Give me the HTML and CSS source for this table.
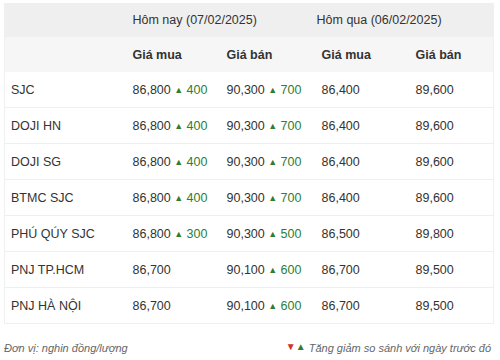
FILE: index.html
```html
<!DOCTYPE html>
<html lang="vi">
<head>
<meta charset="utf-8">
<link rel="stylesheet" href="styles.css">
</head>
<body>
<div class="wrap">
<table class="gold">
  <colgroup>
    <col class="c1"><col class="c2"><col class="c3"><col class="c4"><col class="c5">
  </colgroup>
  <thead>
    <tr class="h1">
      <th></th>
      <th colspan="2">Hôm nay (07/02/2025)</th>
      <th colspan="2" class="prev">Hôm qua (06/02/2025)</th>
    </tr>
    <tr class="h2">
      <th></th>
      <th>Giá mua</th><th>Giá bán</th><th>Giá mua</th><th>Giá bán</th>
    </tr>
  </thead>
  <tbody>
    <tr><td>SJC</td><td>86,800 <span class="up"><i>▲</i> 400</span></td><td>90,300 <span class="up"><i>▲</i> 700</span></td><td>86,400</td><td>89,600</td></tr>
    <tr><td>DOJI HN</td><td>86,800 <span class="up"><i>▲</i> 400</span></td><td>90,300 <span class="up"><i>▲</i> 700</span></td><td>86,400</td><td>89,600</td></tr>
    <tr><td>DOJI SG</td><td>86,800 <span class="up"><i>▲</i> 400</span></td><td>90,300 <span class="up"><i>▲</i> 700</span></td><td>86,400</td><td>89,600</td></tr>
    <tr><td>BTMC SJC</td><td>86,800 <span class="up"><i>▲</i> 400</span></td><td>90,300 <span class="up"><i>▲</i> 700</span></td><td>86,400</td><td>89,600</td></tr>
    <tr><td>PHÚ QÚY SJC</td><td>86,800 <span class="up"><i>▲</i> 300</span></td><td>90,300 <span class="up"><i>▲</i> 500</span></td><td>86,500</td><td>89,800</td></tr>
    <tr><td>PNJ TP.HCM</td><td>86,700</td><td>90,100 <span class="up"><i>▲</i> 600</span></td><td>86,700</td><td>89,500</td></tr>
    <tr><td>PNJ HÀ NỘI</td><td>86,700</td><td>90,100 <span class="up"><i>▲</i> 600</span></td><td>86,700</td><td>89,500</td></tr>
  </tbody>
</table>
<div class="foot">
  <span>Đơn vị: nghin đồng/lượng</span>
  <span><b class="dn">▼</b><b class="upm">▲</b> Tăng giảm so sánh với ngày trước đó</span>
</div>
</div>
</body>
</html>
```

FILE: styles.css
```css
html, body { margin: 0; padding: 0; background: #fff; }
body { font-family: "Liberation Sans", Arial, sans-serif; color: #333; }
.wrap { padding: 3px 7px 0 4px; }
.gold {
  width: 489px;
  border-collapse: collapse;
  table-layout: fixed;
  font-size: 12.5px;
  border-left: 1px solid #f0f0f0;
  border-right: 1px solid #f0f0f0;
}
.c1 { width: 122px; }
.c2 { width: 94px; }
.c3 { width: 95px; }
.c4 { width: 94px; }
.c5 { width: 84px; }
.gold th, .gold td {
  text-align: left;
  padding: 0 0 0 6px;
  height: 35px;
  white-space: nowrap;
}
.h1 th { background: #efefef; font-weight: normal; height: 34px; }
.h1 th.prev { padding-left: 1px; }
.h2 th { background: #f6f6f6; font-weight: bold; height: 35px; }
.gold tbody td { border-bottom: 1px solid #efefef; height: 35px; }
.up { color: #2e7d32; }
.up i { font-style: normal; font-size: 9px; position: relative; top: -1px; }
.foot {
  display: flex;
  justify-content: space-between;
  font-style: italic;
  font-size: 11px;
  color: #666;
  margin-top: 18px;
  padding-right: 2px;
}
.foot b { font-weight: normal; font-style: normal; font-size: 10px; position: relative; top: -2px; }
.dn { color: #d32f2f; }
.upm { color: #2e7d32; }
```
